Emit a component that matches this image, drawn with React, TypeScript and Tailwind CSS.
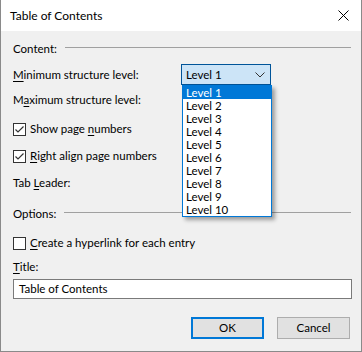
import React from 'react';

const levels = ['Level 1', 'Level 2', 'Level 3', 'Level 4', 'Level 5', 'Level 6', 'Level 7', 'Level 8', 'Level 9', 'Level 10'];

// Accelerator letter underline
const U = ({ children }: { children: React.ReactNode }) => (
  <span className="underline underline-offset-2">{children}</span>
);

const Checkbox = ({ checked }: { checked?: boolean }) => (
  <div className="w-[13px] h-[13px] border border-[#333333] bg-white flex items-center justify-center shrink-0">
    {checked && (
      <svg width="11" height="11" viewBox="0 0 11 11">
        <path d="M1.5 5.5 L4 8 L9.5 2.5" fill="none" stroke="#333333" strokeWidth="1.2" />
      </svg>
    )}
  </div>
);

const GroupHeader = ({ label, className }: { label: string; className?: string }) => (
  <div className={`flex items-center h-[16px] ${className ?? ''}`}>
    <span>{label}</span>
    <div className="flex-1 ml-[8px] h-px bg-[#a0a0a0] mt-[-4px]" />
  </div>
);

export default function App() {
  return (
    <div
      className="relative w-[362px] h-[352px] bg-[#f0f0f0] border-x border-b border-[#8a8a8a] text-[11.5px] text-black overflow-hidden"
      style={{ fontFamily: 'Lato, "Noto Sans", sans-serif' }}
    >
      {/* Title bar */}
      <div className="h-[31px] bg-white flex items-center justify-between pl-[9px] pr-[12px]">
        <span className="text-[12px]">Table of Contents</span>
        <svg width="11" height="11" viewBox="0 0 11 11">
          <path d="M0.5 0.5 L10.5 10.5 M10.5 0.5 L0.5 10.5" stroke="#000" strokeWidth="1" />
        </svg>
      </div>

      <div className="pl-[12px] pr-[10px] leading-none">
        <GroupHeader label="Content:" className="mt-[10px]" />

        <div className="flex items-center mt-[7px] h-[21px]">
          <span className="w-[168px]">
            <U>M</U>inimum structure level:
          </span>
          <div className="w-[90px] h-[21px] border border-[#005499] bg-[#cce4f7] flex items-center justify-between pl-[4px] pr-[5px]">
            <span>Level 1</span>
            <svg width="10" height="6" viewBox="0 0 10 6">
              <path d="M0.5 0.5 L5 5 L9.5 0.5" fill="none" stroke="#333" strokeWidth="1" />
            </svg>
          </div>
        </div>

        <div className="flex items-center mt-[7px] h-[16px]">
          <span>
            M<U>a</U>ximum structure level:
          </span>
        </div>

        <div className="flex items-center gap-[4px] mt-[13px] h-[16px]">
          <Checkbox checked />
          <span>
            Show page <U>n</U>umbers
          </span>
        </div>

        <div className="flex items-center gap-[4px] mt-[11px] h-[16px]">
          <Checkbox checked />
          <span>
            <U>R</U>ight align page numbers
          </span>
        </div>

        <div className="flex items-center mt-[11px] h-[16px]">
          <span>
            Tab <U>L</U>eader:
          </span>
        </div>

        <GroupHeader label="Options:" className="mt-[15px]" />

        <div className="flex items-center gap-[4px] mt-[13px] h-[16px]">
          <Checkbox />
          <span>
            <U>C</U>reate a hyperlink for each entry
          </span>
        </div>

        <div className="flex items-center mt-[8px] h-[16px]">
          <span>
            <U>T</U>itle:
          </span>
        </div>

        <div className="mt-[4px] h-[20px] w-[339px] border border-[#7a7a7a] bg-white flex items-center px-[5px]">
          Table of Contents
        </div>

        <div className="flex justify-end gap-[13px] mt-[18px] pr-[1px]">
          <button className="w-[73px] h-[22px] border-2 border-[#0078d7] bg-[#e1e1e1] text-[11.5px]">OK</button>
          <button className="w-[73px] h-[22px] border border-[#adadad] bg-[#e1e1e1] text-[11.5px]">Cancel</button>
        </div>
      </div>

      {/* Open dropdown list */}
      <div className="absolute left-[181px] top-[85px] w-[90px] border border-[#0078d7] bg-white shadow-[3px_3px_4px_rgba(0,0,0,0.35)]">
        {levels.map((l, i) => (
          <div
            key={l}
            className={`h-[13px] flex items-center pl-[3px] leading-[12px] ${i === 0 ? 'bg-[#0078d7] text-white' : ''}`}
          >
            {l}
          </div>
        ))}
      </div>
    </div>
  );
}
